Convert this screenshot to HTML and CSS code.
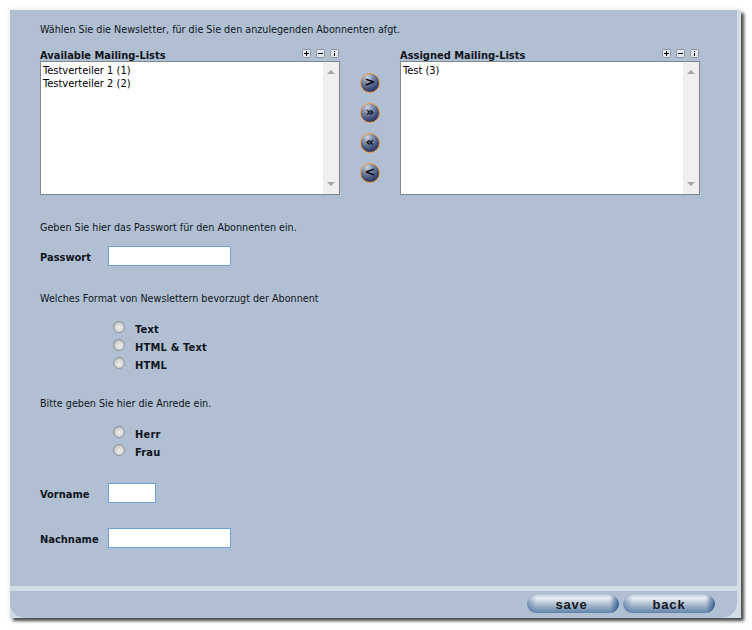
FILE: index.html
```html
<!DOCTYPE html>
<html lang="de">
<head>
<meta charset="utf-8">
<title>Abonnent anlegen</title>
<link rel="stylesheet" href="styles.css">
</head>
<body>
<div class="panel">
  <main class="main">
    <p class="hint">Wählen Sie die Newsletter, für die Sie den anzulegenden Abonnenten afgt.</p>
    <div class="lists">
      <section class="list-col">
        <div class="list-head">
          <h2 class="list-title">Available Mailing-Lists</h2>
          <div class="tools">
            <svg class="tool" viewBox="0 0 9 9"><rect class="tool-box" x=".5" y=".5" width="8" height="8" rx="1"/><path class="tool-mark" d="M2 4.5h5M4.5 2v5"/></svg>
            <svg class="tool" viewBox="0 0 9 9"><rect class="tool-box" x=".5" y=".5" width="8" height="8" rx="1"/><path class="tool-mark" d="M2 4.5h5"/></svg>
            <svg class="tool" viewBox="0 0 9 9"><rect class="tool-box" x=".5" y=".5" width="8" height="8" rx="1"/><path class="tool-mark" d="M4.5 2v1M4.5 4v3"/></svg>
          </div>
        </div>
        <div class="listbox">
          <ul class="items"><li>Testverteiler 1 (1)</li><li>Testverteiler 2 (2)</li></ul>
          <div class="scroll"><span class="arrow-up"></span><span class="arrow-down"></span></div>
        </div>
      </section>
      <div class="movers">
        <button class="mover" type="button">&gt;</button>
        <button class="mover" type="button">»</button>
        <button class="mover" type="button">«</button>
        <button class="mover" type="button">&lt;</button>
      </div>
      <section class="list-col">
        <div class="list-head">
          <h2 class="list-title">Assigned Mailing-Lists</h2>
          <div class="tools">
            <svg class="tool" viewBox="0 0 9 9"><rect class="tool-box" x=".5" y=".5" width="8" height="8" rx="1"/><path class="tool-mark" d="M2 4.5h5M4.5 2v5"/></svg>
            <svg class="tool" viewBox="0 0 9 9"><rect class="tool-box" x=".5" y=".5" width="8" height="8" rx="1"/><path class="tool-mark" d="M2 4.5h5"/></svg>
            <svg class="tool" viewBox="0 0 9 9"><rect class="tool-box" x=".5" y=".5" width="8" height="8" rx="1"/><path class="tool-mark" d="M4.5 2v1M4.5 4v3"/></svg>
          </div>
        </div>
        <div class="listbox">
          <ul class="items"><li>Test (3)</li></ul>
          <div class="scroll"><span class="arrow-up"></span><span class="arrow-down"></span></div>
        </div>
      </section>
    </div>

    <p class="hint hint-pass">Geben Sie hier das Passwort für den Abonnenten ein.</p>
    <div class="field field-pass"><label class="field-label">Passwort</label><input class="text wide" type="text"></div>

    <p class="hint hint-format">Welches Format von Newslettern bevorzugt der Abonnent</p>
    <div class="radios radios-format">
      <label class="radio"><input type="radio" name="fmt"><span>Text</span></label>
      <label class="radio"><input type="radio" name="fmt"><span>HTML &amp; Text</span></label>
      <label class="radio"><input type="radio" name="fmt"><span>HTML</span></label>
    </div>

    <p class="hint hint-title">Bitte geben Sie hier die Anrede ein.</p>
    <div class="radios radios-title">
      <label class="radio"><input type="radio" name="sal"><span>Herr</span></label>
      <label class="radio"><input type="radio" name="sal"><span>Frau</span></label>
    </div>

    <div class="field field-first"><label class="field-label">Vorname</label><input class="text short" type="text"></div>
    <div class="field field-last"><label class="field-label">Nachname</label><input class="text wide" type="text"></div>
  </main>
  <footer class="footer">
    <button class="action action-save" type="button">save</button>
    <button class="action" type="button">back</button>
  </footer>
</div>
</body>
</html>
```
FILE: styles.css
```css
* { box-sizing: border-box; }
html, body { margin: 0; background: #fff; }
body {
  width: 752px;
  height: 630px;
  padding: 10px 0 0 10px;
  overflow: hidden;
  font-family: "DejaVu Sans", Verdana, sans-serif;
  font-size: 10px;
  color: #10141c;
}
.panel {
  width: 731px;
  height: 608px;
  background: #d0dce6;
  box-shadow: 3px 3px 3px #4a4a4a, 0 0 5px rgba(0,0,0,.12);
  padding-right: 4px;
  display: flex;
  flex-direction: column;
}
.main {
  height: 576px;
  background: #b0c0d2;
  padding: 13px 30px 0;
}
p { margin: 0; }
.hint { font-family: "DejaVu Sans Condensed", "DejaVu Sans", sans-serif; font-size: 10.7px; line-height: 14px; }
.lists { display: flex; margin-top: 11px; }
.list-col { width: 300px; }
.list-head { display: flex; justify-content: space-between; height: 13px; }
.list-title { margin: 0; font-family: "DejaVu Sans Condensed", "DejaVu Sans", sans-serif; font-size: 11px; line-height: 15px; font-weight: bold; }
.tools { display: flex; gap: 5px; padding: 1px 1px 0 0; }
.tool { width: 9px; height: 9px; display: block; }
.tool-box { fill: #e4e8ec; stroke: #8a94a2; stroke-width: 1; }
.tool-mark { fill: none; stroke: #000; stroke-width: 1; }
.listbox {
  height: 134px;
  display: flex;
  background: #fff;
  border: 1px solid #7f8791;
}
.items {
  flex: 1;
  margin: 0;
  padding: 2px 2px;
  list-style: none;
  font-family: "DejaVu Sans Condensed", "DejaVu Sans", sans-serif;
  font-size: 11px;
  line-height: 13px;
  color: #000;
}
.scroll {
  width: 16px;
  background: #efefef;
  display: flex;
  flex-direction: column;
  justify-content: space-between;
  align-items: center;
  padding: 8px 0;
}
.arrow-up, .arrow-down { width: 0; height: 0; border-left: 4px solid transparent; border-right: 4px solid transparent; }
.arrow-up { border-bottom: 4px solid #a8a8a8; }
.arrow-down { border-top: 4px solid #a8a8a8; }
.movers {
  width: 60px;
  display: flex;
  flex-direction: column;
  align-items: center;
  gap: 10px;
  padding-top: 25px;
}
.mover {
  width: 20px;
  height: 20px;
  padding: 0 0 3px;
  border: 1px solid #f09a3c;
  border-radius: 50%;
  background: radial-gradient(circle at 35% 18%, #ccd4e0 0, #7f8eac 30%, #36436f 68%, #222e58 100%);
  font-family: "DejaVu Sans", sans-serif;
  font-size: 13px;
  line-height: 14px;
  font-weight: bold;
  color: #05050a;
}
.hint-pass { margin-top: 26px; }
.field { display: flex; align-items: center; height: 20px; }
.field-label { width: 68px; padding-top: 2px; font-family: "DejaVu Sans Condensed", "DejaVu Sans", sans-serif; font-size: 11px; font-weight: bold; }
.field-pass { margin-top: 11px; }
.hint-format { margin-top: 26px; }
.text { height: 20px; background: #fff; border: 1px solid #6f9fd8; padding: 0 2px; outline: none; }
.wide { width: 123px; }
.short { width: 48px; }
.radios { display: flex; flex-direction: column; padding-left: 73px; }
.radios-format { margin-top: 14px; }
.radios-title { margin-top: 14px; }
.hint-title { margin-top: 23px; }
.radio { display: flex; align-items: flex-start; height: 18px; font-family: "DejaVu Sans Condensed", "DejaVu Sans", sans-serif; font-size: 11px; font-weight: bold; letter-spacing: .2px; }
.radio span { margin-left: 10px; line-height: 18px; padding-top: 1px; }
.radio input {
  appearance: none;
  width: 12px;
  height: 12px;
  margin: 1px 0 0;
  border: 1px solid #8e949a;
  border-radius: 50%;
  background: radial-gradient(circle at 55% 60%, #f0f0f0 0, #d4d4d4 50%, #a8a8a8 100%);
}
.field-first { margin-top: 22px; }
.field-last { margin-top: 25px; }
.footer {
  margin-top: 5px;
  flex: 1;
  background: #b0c0d2;
  border-radius: 0 0 15px 15px;
  display: flex;
  justify-content: flex-end;
  align-items: flex-start;
  gap: 4px;
  padding: 4px 22px 0 0;
}
.action {
  width: 92px;
  height: 18px;
  padding: 0;
  border: 0;
  border-radius: 9px;
  background:
    linear-gradient(90deg, rgba(60,100,150,.5) 0, rgba(60,100,150,0) 10%, rgba(60,100,150,0) 90%, rgba(40,85,140,.9) 100%),
    linear-gradient(#c6d2de 0, #e8eef3 18%, #a8bacd 55%, #5f83a9 100%);
  font-family: "Liberation Sans", Arial, sans-serif;
  font-size: 13px;
  font-weight: bold;
  letter-spacing: .8px;
  color: #16181c;
}
.action-save { padding-right: 3px; }
```
